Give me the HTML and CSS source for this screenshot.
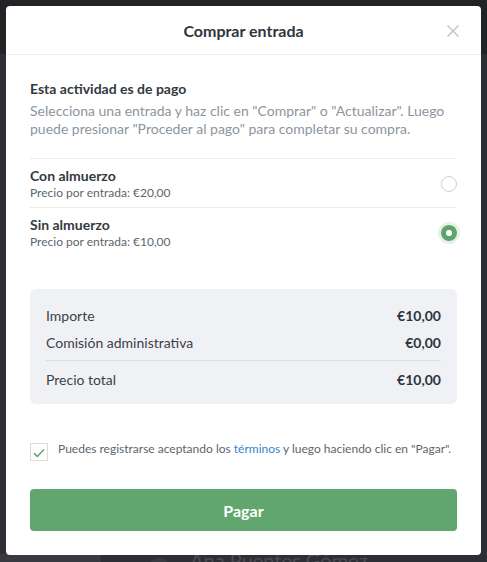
FILE: index.html
```html
<!DOCTYPE html>
<html lang="es">
<head>
<meta charset="utf-8">
<title>Comprar entrada</title>
<link rel="stylesheet" href="styles.css">
</head>
<body>
<div class="page">
  <div class="topbar"></div>
  <div class="page-main">
    <div class="bg-row">
      <div class="bg-card"></div>
      <div class="bg-avatar"></div>
      <div class="bg-name">Ana Puentes Gómez</div>
    </div>
  </div>
</div>

<div class="modal">
  <div class="modal-header">
    <h1 class="modal-title">Comprar entrada</h1>
    <button class="close" aria-label="Cerrar">
      <svg width="12" height="12" viewBox="0 0 12 12"><path d="M0.5 0.5 L11.5 11.5 M11.5 0.5 L0.5 11.5" stroke="#bfc3c6" stroke-width="1.4" fill="none"/></svg>
    </button>
  </div>
  <div class="modal-body">
    <h2 class="section-title">Esta actividad es de pago</h2>
    <p class="section-desc">Selecciona una entrada y haz clic en "Comprar" o "Actualizar". Luego puede presionar "Proceder al pago" para completar su compra.</p>

    <div class="options">
      <div class="option">
        <div class="option-text">
          <div class="option-name">Con almuerzo</div>
          <div class="option-price">Precio por entrada: €20,00</div>
        </div>
        <span class="radio"></span>
      </div>
      <div class="option">
        <div class="option-text">
          <div class="option-name">Sin almuerzo</div>
          <div class="option-price">Precio por entrada: €10,00</div>
        </div>
        <span class="radio checked"></span>
      </div>
    </div>

    <div class="summary">
      <div class="sum-row"><span>Importe</span><span class="val">€10,00</span></div>
      <div class="sum-row second"><span>Comisión administrativa</span><span class="val">€0,00</span></div>
      <div class="sum-divider"></div>
      <div class="sum-row"><span>Precio total</span><span class="val">€10,00</span></div>
    </div>

    <div class="terms">
      <span class="checkbox">
        <svg width="12" height="10" viewBox="0 0 12 10"><path d="M1 5.2 L4.3 8.4 L11 1.4" stroke="#5ea46b" stroke-width="1.5" fill="none"/></svg>
      </span>
      <span class="terms-text">Puedes registrarse aceptando los <a class="link" href="#">términos</a> y luego haciendo clic en "Pagar".</span>
    </div>

    <button class="pay">Pagar</button>
  </div>
</div>
</body>
</html>
```

FILE: styles.css
```css
* { box-sizing: border-box; }
html, body { margin: 0; padding: 0; }
body {
  width: 487px;
  height: 562px;
  overflow: hidden;
  background: #2e2f34;
  font-family: Lato, "Open Sans", sans-serif;
  color: #333a40;
  position: relative;
}
.page { height: 562px; display: flex; flex-direction: column; }
.topbar { height: 54px; background: #222327; }
.page-main { flex: 1; display: flex; flex-direction: column; justify-content: flex-end; }
.bg-row { height: 14px; display: flex; align-items: flex-start; margin-bottom: -6px; }
.bg-card { width: 102px; height: 8px; background: #393a3f; margin-top: 0; border-right: 1px solid #2a2b2f; }
.bg-avatar { width: 22px; height: 22px; border-radius: 50%; background: #393a3f; margin-left: 46px; margin-top: 4px; }
.bg-name { margin-left: 20px; font-size: 20px; line-height: 20px; color: #4a4c52; margin-top: -4px; }

.modal {
  position: absolute;
  top: 6px;
  left: 6px;
  width: 475px;
  background: #fff;
  border-radius: 4px;
}
.modal-header {
  height: 49px;
  border-bottom: 1px solid #ececec;
  display: flex;
  align-items: center;
  justify-content: center;
  position: relative;
}
.modal-title {
  margin: 0;
  font-size: 16px;
  font-weight: 700;
  color: #2f353a;
  line-height: 18px;
  margin-top: 2px;
}
.close {
  position: absolute;
  right: 22px;
  top: 19px;
  border: 0;
  background: none;
  padding: 0;
  width: 12px;
  height: 12px;
  display: flex;
}
.modal-body { padding: 25px 24px 24px; }
.section-title {
  margin: 0;
  font-size: 14px;
  line-height: 18px;
  font-weight: 700;
  color: #333a40;
}
.section-desc {
  margin: 4px 0 0;
  font-size: 14px;
  line-height: 18px;
  color: #8c959e;
}
.options { margin-top: 20px; }
.option {
  border-top: 1px solid #ebebeb;
  padding: 8px 0 7px;
  display: flex;
  align-items: center;
  justify-content: space-between;
}
.option-name { font-size: 14px; line-height: 18px; font-weight: 700; color: #333a40; }
.option-price { font-size: 12px; line-height: 15px; color: #5d656c; }
.radio {
  width: 16px;
  height: 16px;
  border-radius: 50%;
  border: 1px solid #cfcfcf;
  background: #fff;
  margin-top: 1px;
}
.radio.checked {
  border: 0;
  background: radial-gradient(circle, #fff 0 2.8px, #5ea46b 3.3px);
  box-shadow: 0 0 0 3px #e6f1e8;
}
.summary {
  margin-top: 33px;
  background: #f0f1f5;
  border-radius: 6px;
  padding: 18px 16px 15px;
}
.sum-row {
  display: flex;
  justify-content: space-between;
  font-size: 14px;
  line-height: 18px;
  color: #3a4146;
}
.sum-row.second { margin-top: 9px; }
.sum-row .val { font-weight: 700; color: #2f353a; }
.sum-divider { height: 1px; background: #dcdee2; margin: 8px 0 10px; }
.terms {
  margin-top: 37px;
  display: flex;
  align-items: flex-start;
  gap: 10px;
}
.checkbox {
  width: 18px;
  height: 18px;
  border: 1px solid #dcdcdc;
  margin-top: 2px;
  display: flex;
  align-items: center;
  justify-content: center;
  padding-top: 2px;
}
.terms-text { font-size: 12px; line-height: 16px; color: #5d656c; }
.link { color: #3584c8; text-decoration: none; }
.pay {
  margin-top: 28px;
  width: 100%;
  height: 42px;
  border: 0;
  border-radius: 4px;
  background: #62a66f;
  color: #fff;
  font-family: Lato, "Open Sans", sans-serif;
  font-size: 16px;
  font-weight: 700;
  display: block;
}
```
